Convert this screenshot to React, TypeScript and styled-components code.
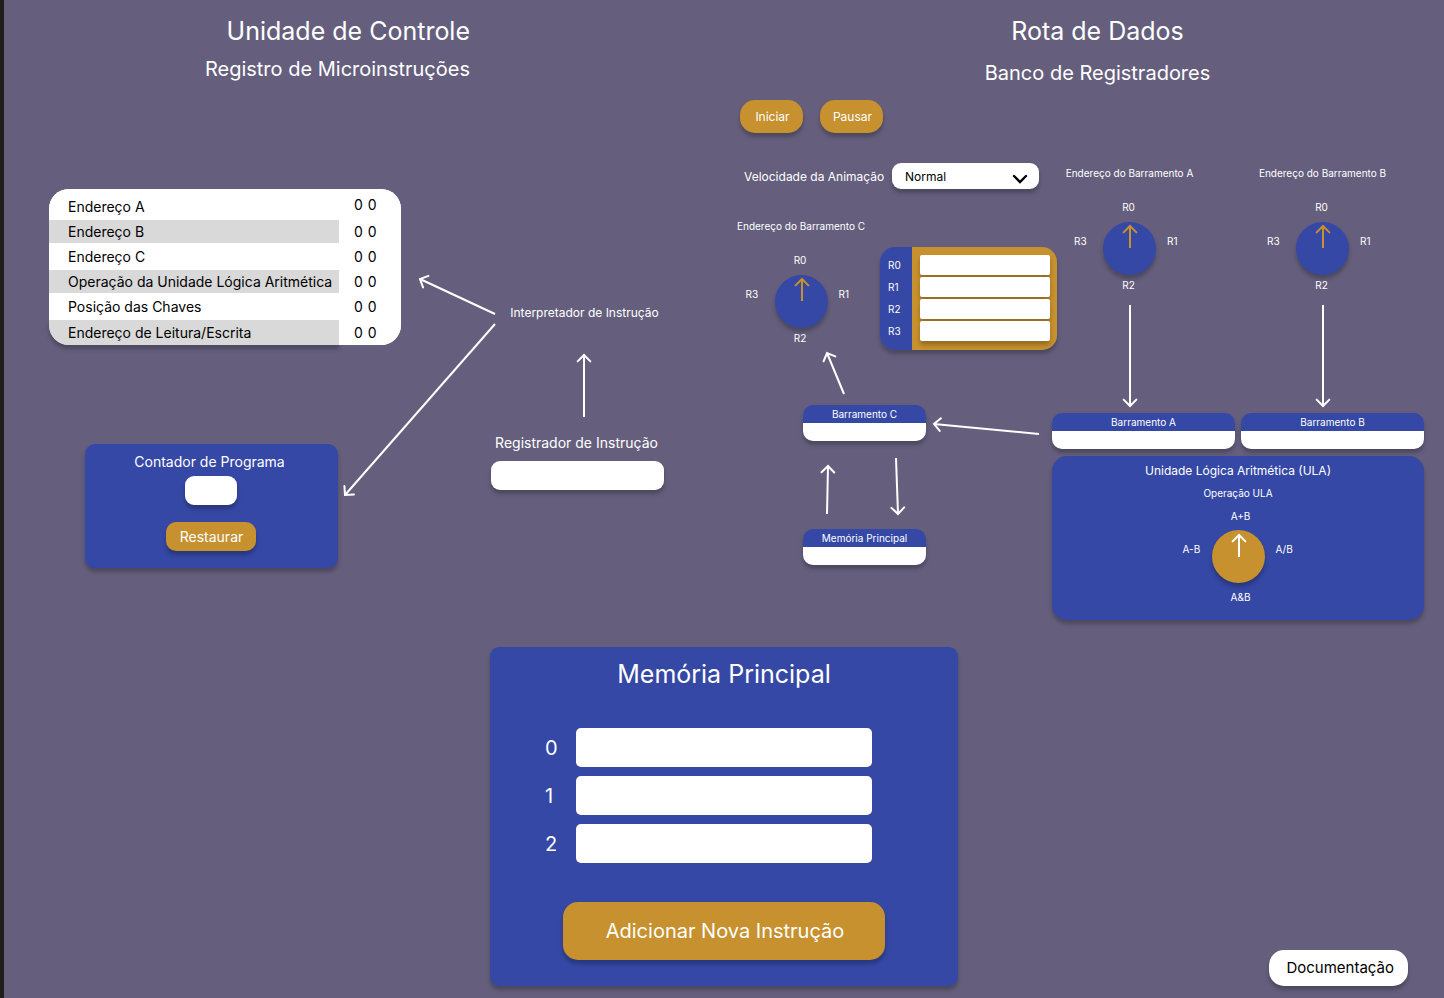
import React, { useId } from "react";
import styled, { createGlobalStyle } from "styled-components";

const color = {
  page: "#655f7d",
  edge: "#1e1e1e",
  blue: "#3548a5",
  gold: "#c6912e",
  stripe: "#d9d9d9",
  white: "#ffffff",
  black: "#000000",
};

const shadow = "0 4px 4px rgba(0, 0, 0, 0.25)";

const GlobalStyle = createGlobalStyle`
  *, *::before, *::after { box-sizing: border-box; }
  body {
    margin: 0;
    background: ${color.page};
    color: ${color.white};
    font-family: Inter, "Liberation Sans", sans-serif;
    font-size: 10px;
    line-height: 16px;
  }
  button, input, select { font: inherit; color: inherit; border: 0; padding: 0; margin: 0; }
  h1, h2, h3, h4 { margin: 0; font-weight: 400; }
`;

const Page = styled.main`
  min-height: 100vh;
  border-left: 4px solid ${color.edge};
  display: flex;
  flex-direction: column;
  gap: 27px;
  padding-bottom: 12px;
`;

const Sections = styled.div`
  display: grid;
  grid-template-columns: minmax(696px, 29fr) minmax(744px, 31fr);
`;

const ControlSection = styled.section`
  padding: 15px 36px 0 45px;
`;

const DataSection = styled.section`
  padding: 15px 20px 0 37px;
`;

const SectionHeader = styled.header<{ $align: string; $gap: number; $width: number; $indent: number }>`
  display: flex;
  flex-direction: column;
  align-items: ${(p) => p.$align};
  gap: ${(p) => p.$gap}px;
  width: ${(p) => p.$width}px;
  margin-left: ${(p) => p.$indent}px;
  white-space: nowrap;
`;

const Title = styled.h1`
  font-size: 25px;
  line-height: 32px;
`;

const Subtitle = styled.h2`
  font-size: 20px;
  line-height: 24px;
`;

/* ---------- shared parts ---------- */

const Button = styled.button<{ $w: number; $h: number; $size: number; $radius: number }>`
  width: ${(p) => p.$w}px;
  height: ${(p) => p.$h}px;
  padding-left: 2px;
  border-radius: ${(p) => p.$radius}px;
  font-size: ${(p) => p.$size}px;
  background: ${color.gold};
  color: ${color.white};
  box-shadow: ${shadow};
  cursor: pointer;
`;

const Field = styled.input<{ $w: number; $h: number; $radius: number; $flat?: boolean }>`
  display: block;
  width: ${(p) => p.$w}px;
  height: ${(p) => p.$h}px;
  border-radius: ${(p) => p.$radius}px;
  padding: 0 8px;
  background: ${color.white};
  color: ${color.black};
  box-shadow: ${(p) => (p.$flat ? "none" : shadow)};
`;

const Drawing = styled.svg`
  display: block;
  flex: none;
  overflow: visible;
  fill: none;
  stroke-width: 2;
`;

type WireProps = { from: [number, number]; to: [number, number]; stroke?: string };

function Wire({ from, to, stroke = color.white }: WireProps) {
  const angle = Math.atan2(to[1] - from[1], to[0] - from[0]);
  const head = (turn: number) => {
    const a = angle + Math.PI + turn;
    return `${to[0] + 9 * Math.cos(a)},${to[1] + 9 * Math.sin(a)}`;
  };
  return (
    <g stroke={stroke}>
      <path d={`M${from} L${to}`} />
      <path d={`M${head(Math.PI / 4)} L${to} L${head(-Math.PI / 4)}`} strokeLinecap="round" />
    </g>
  );
}

/* ---------- control unit ---------- */

const ControlGrid = styled.div`
  display: grid;
  grid-template-columns: 294px 58px 90px 173px;
  margin-top: 108px;
`;

const ControlLeft = styled.div`
  grid-area: 1 / 1 / 2 / 3;
  display: flex;
  flex-direction: column;
  gap: 99px;
`;

const ControlWires = styled.div`
  grid-area: 1 / 2 / 2 / 4;
  padding-top: 85px;
`;

const ControlRight = styled.div`
  grid-area: 1 / 4 / 2 / 5;
  display: flex;
  flex-direction: column;
  align-items: center;
  padding-top: 114px;
`;

const MicroTable = styled.table`
  width: 352px;
  border-collapse: separate;
  border-spacing: 0;
  border-radius: 20px;
  background: ${color.white};
  color: ${color.black};
  font-size: 14px;
  line-height: 20px;
`;

const MicroRow = styled.tr<{ $h: number; $striped: boolean }>`
  height: ${(p) => p.$h}px;
  th {
    width: 290px;
    padding: 0 0 0 19px;
    font-weight: 400;
    text-align: left;
    white-space: nowrap;
    background: ${(p) => (p.$striped ? color.stripe : color.white)};
  }
  td {
    padding: 0 0 0 15px;
    background: ${color.white};
  }
  &:first-child th { padding-top: 5px; border-top-left-radius: 20px; }
  &:first-child td { border-top-right-radius: 20px; }
  &:last-child th { border-bottom-left-radius: 20px; box-shadow: ${shadow}; }
  &:last-child td { border-bottom-right-radius: 20px; }
`;

const Bits = styled.span`
  display: flex;
  gap: 5px;
`;

const microRows = [
  { label: "Endereço A", height: 31 },
  { label: "Endereço B", height: 23 },
  { label: "Endereço C", height: 27 },
  { label: "Operação da Unidade Lógica Aritmética", height: 23 },
  { label: "Posição das Chaves", height: 27 },
  { label: "Endereço de Leitura/Escrita", height: 25 },
];

const CounterCard = styled.div`
  width: 253px;
  height: 124px;
  margin-left: 36px;
  padding: 8px 2px 0 0;
  border-radius: 10px;
  background: ${color.blue};
  box-shadow: ${shadow};
  display: flex;
  flex-direction: column;
  align-items: center;
  gap: 17px;
`;

const LabeledField = styled.div<{ $gap: number }>`
  display: flex;
  flex-direction: column;
  align-items: center;
  gap: ${(p) => p.$gap}px;
`;

const FieldLabel = styled.label`
  padding-right: 2px;
  font-size: 14px;
  line-height: 20px;
`;

const Interpreter = styled.div`
  display: flex;
  flex-direction: column;
  align-items: center;
  gap: 32px;
  padding-left: 14px;
  margin-bottom: 16px;
  font-size: 12px;
  line-height: 20px;
  white-space: nowrap;
`;

/* ---------- data path ---------- */

const DataBody = styled.div`
  display: flex;
  margin-top: 15px;
`;

const DataLeft = styled.div`
  width: 315px;
  flex: none;
`;

const DataRight = styled.div`
  width: 372px;
  flex: none;
  padding-top: 65px;
`;

const PlayBar = styled.div`
  display: flex;
  gap: 17px;
  padding-left: 3px;
`;

const SpeedBar = styled.div`
  display: flex;
  align-items: center;
  gap: 9px;
  margin: 30px 0 29px;
  padding-left: 7px;
  font-size: 12px;
  line-height: 16px;
`;

const SpeedLabel = styled.label`
  width: 139px;
  padding-top: 2px;
  white-space: nowrap;
`;

const SelectBox = styled.div`
  position: relative;
  width: 147px;
  height: 26px;
  select {
    appearance: none;
    width: 100%;
    height: 100%;
    padding: 2px 0 0 13px;
    border-radius: 9px;
    background: ${color.white};
    color: ${color.black};
    box-shadow: ${shadow};
  }
  svg {
    position: absolute;
    right: 11px;
    top: 10px;
    pointer-events: none;
  }
`;

const DialBox = styled.div<{ $titleGap: number }>`
  width: 129px;
  display: flex;
  flex-direction: column;
  align-items: center;
  white-space: nowrap;
  h4 {
    font-size: 10px;
    margin-bottom: ${(p) => p.$titleGap}px;
  }
`;

const DialRow = styled.div<{ $above: number; $below: number }>`
  display: flex;
  gap: 11px;
  margin: ${(p) => p.$above}px 0 ${(p) => p.$below}px;
`;

const DialSide = styled.span`
  width: 18px;
  padding-top: 11px;
`;

/* The operation names sit slightly right of the dial, the register names slightly left. */
const DialEnd = styled.span<{ $alu: boolean }>`
  padding: ${(p) => (p.$alu ? "0 0 0 5px" : "0 2px 0 0")};
`;

const DialFace = styled.div<{ $fill: string }>`
  width: 53px;
  height: 53px;
  border-radius: 50%;
  background: ${(p) => p.$fill};
  box-shadow: ${shadow};
`;

type DialProps = { title: string; options: [string, string, string, string]; alu?: boolean };

function Dial({ title, options, alu = false }: DialProps) {
  const [top, right, bottom, left] = options;
  return (
    <DialBox $titleGap={alu ? 7 : 18}>
      <h4>{title}</h4>
      <DialEnd $alu={alu}>{top}</DialEnd>
      <DialRow $above={alu ? 6 : 7} $below={alu ? 6 : 2}>
        <DialSide>{left}</DialSide>
        <DialFace $fill={alu ? color.gold : color.blue}>
          <Drawing width="53" height="53" viewBox="0 0 53 53" aria-hidden="true">
            <Wire from={[27, alu ? 27 : 26]} to={[27, alu ? 5 : 4]} stroke={alu ? color.white : color.gold} />
          </Drawing>
        </DialFace>
        <DialSide>{right}</DialSide>
      </DialRow>
      <DialEnd $alu={alu}>{bottom}</DialEnd>
    </DialBox>
  );
}

const BankRow = styled.div`
  display: flex;
  gap: 15px;
`;

const RegisterBank = styled.div`
  flex: none;
  display: flex;
  flex-direction: column;
  gap: 2px;
  width: 177px;
  margin-top: 29px;
  padding: 8px 7px 9px 8px;
  border-radius: 15px;
  background: linear-gradient(to right, ${color.blue} 32px, ${color.gold} 32px);
  box-shadow: ${shadow};
`;

const RegisterRow = styled.div`
  display: flex;
  justify-content: space-between;
  line-height: 20px;
`;

const BusBox = styled.div<{ $w: number }>`
  flex: none;
  width: ${(p) => p.$w}px;
  border-radius: 10px;
  overflow: hidden;
  text-align: center;
  background: ${color.blue};
  label { display: block; line-height: 18px; }
`;

const BusShadow = styled.div`
  flex: none;
  border-radius: 10px;
  box-shadow: ${shadow};
`;

function Bus({ name, width }: { name: string; width: number }) {
  const id = useId();
  return (
    <BusShadow>
      <BusBox $w={width}>
        <label htmlFor={id}>{name}</label>
        <Field id={id} $w={width} $h={18} $radius={0} $flat />
      </BusBox>
    </BusShadow>
  );
}

const ReturnWire = styled.div`
  padding-left: 85px;
  margin: 1px 0 10px;
`;

const BusChain = styled.div`
  padding-left: 66px;
  display: flex;
  align-items: flex-start;
  gap: 7px;
`;

const BusStack = styled.div`
  display: flex;
  flex-direction: column;
`;

const ExchangeWires = styled.div`
  margin: 17px 0 13px;
`;

const InputWire = styled.div`
  padding-top: 12px;
`;

const Dials = styled.div`
  display: flex;
  gap: 64px;
  padding-left: 13px;
`;

const DialColumn = styled.div`
  display: flex;
  flex-direction: column;
  align-items: center;
  gap: 12px;
`;

const InputBuses = styled.div`
  display: flex;
  justify-content: space-between;
  margin: 6px 0 7px;
`;

const AluCard = styled.div`
  height: 164px;
  padding-top: 7px;
  border-radius: 15px;
  background: ${color.blue};
  box-shadow: ${shadow};
  display: flex;
  flex-direction: column;
  align-items: center;
  gap: 6px;
  h3 { font-size: 12px; line-height: 16px; }
`;

/* ---------- main memory ---------- */

const Bottom = styled.div`
  display: grid;
  grid-template-columns: 1fr 468px 1fr;
  align-items: end;
`;

const MemoryCard = styled.section`
  grid-column: 2;
  padding: 11px 0 26px;
  border-radius: 9px;
  background: ${color.blue};
  box-shadow: ${shadow};
  display: flex;
  flex-direction: column;
  align-items: center;
`;

const MemoryList = styled.div`
  display: flex;
  flex-direction: column;
  gap: 9px;
  margin: 38px 0 39px;
  padding-right: 31px;
`;

const MemoryRow = styled.div`
  display: flex;
  align-items: center;
  font-size: 20px;
  line-height: 24px;
  label { width: 31px; }
`;

const DocLink = styled.a`
  justify-self: end;
  margin-right: 36px;
  padding: 0 14px 0 17px;
  height: 36px;
  border-radius: 15px;
  background: ${color.white};
  color: ${color.black};
  box-shadow: ${shadow};
  font-size: 15px;
  line-height: 36px;
  text-decoration: none;
`;

const registers: [string, string, string, string] = ["R0", "R1", "R2", "R3"];

export default function App() {
  return (
    <>
      <GlobalStyle />
      <Page>
        <Sections>
          <ControlSection>
            <SectionHeader $align="flex-end" $gap={10} $width={421} $indent={0}>
              <Title>Unidade de Controle</Title>
              <Subtitle>Registro de Microinstruções</Subtitle>
            </SectionHeader>
            <ControlGrid>
              <ControlLeft>
                <MicroTable>
                  <tbody>
                    {microRows.map((row, i) => (
                      <MicroRow key={row.label} $h={row.height} $striped={i % 2 === 1}>
                        <th scope="row">{row.label}</th>
                        <td>
                          <Bits>
                            <span>0</span>
                            <span>0</span>
                          </Bits>
                        </td>
                      </MicroRow>
                    ))}
                  </tbody>
                </MicroTable>
                <CounterCard>
                  <LabeledField $gap={4}>
                    <FieldLabel htmlFor="counter">Contador de Programa</FieldLabel>
                    <Field id="counter" $w={52} $h={29} $radius={9} />
                  </LabeledField>
                  <Button $w={90} $h={29} $size={14} $radius={10}>Restaurar</Button>
                </CounterCard>
              </ControlLeft>
              <ControlWires>
                <Drawing width="153" height="223" viewBox="343 274 153 223" aria-hidden="true">
                  <Wire from={[495, 314]} to={[420, 279]} />
                  <Wire from={[495, 324]} to={[345, 495]} />
                </Drawing>
              </ControlWires>
              <ControlRight>
                <Interpreter>
                  <span>Interpretador de Instrução</span>
                  <Drawing width="16" height="62" viewBox="0 0 16 62" aria-hidden="true">
                    <Wire from={[8, 62]} to={[8, 0]} />
                  </Drawing>
                </Interpreter>
                <LabeledField $gap={8}>
                  <FieldLabel htmlFor="instruction">Registrador de Instrução</FieldLabel>
                  <Field id="instruction" $w={173} $h={29} $radius={9} />
                </LabeledField>
              </ControlRight>
            </ControlGrid>
          </ControlSection>

          <DataSection>
            <SectionHeader $align="center" $gap={14} $width={225} $indent={248}>
              <Title>Rota de Dados</Title>
              <Subtitle>Banco de Registradores</Subtitle>
            </SectionHeader>
            <DataBody>
              <DataLeft>
                <PlayBar>
                  <Button $w={63} $h={33} $size={12} $radius={15}>Iniciar</Button>
                  <Button $w={63} $h={33} $size={12} $radius={15}>Pausar</Button>
                </PlayBar>
                <SpeedBar>
                  <SpeedLabel htmlFor="speed">Velocidade da Animação</SpeedLabel>
                  <SelectBox>
                    <select id="speed" defaultValue="normal">
                      <option value="normal">Normal</option>
                    </select>
                    <svg width="16" height="11" viewBox="0 0 16 11" fill="none" stroke="#000" strokeWidth="2.4" strokeLinecap="round" aria-hidden="true">
                      <path d="M2 3 L8 9 L14 3" />
                    </svg>
                  </SelectBox>
                </SpeedBar>
                <BankRow>
                  <Dial title="Endereço do Barramento C" options={registers} />
                  <RegisterBank>
                    {registers.map((name) => (
                      <RegisterRow key={name}>
                        <label htmlFor={`reg-${name}`}>{name}</label>
                        <Field id={`reg-${name}`} $w={130} $h={20} $radius={2} />
                      </RegisterRow>
                    ))}
                  </RegisterBank>
                </BankRow>
                <ReturnWire>
                  <Drawing width="24" height="44" viewBox="822 351 24 44" aria-hidden="true">
                    <Wire from={[844, 394]} to={[827, 353]} />
                  </Drawing>
                </ReturnWire>
                <BusChain>
                  <BusStack>
                    <Bus name="Barramento C" width={123} />
                    <ExchangeWires>
                      <Drawing width="123" height="58" viewBox="803 458 123 58" aria-hidden="true">
                        <Wire from={[827, 514]} to={[828, 466]} />
                        <Wire from={[896, 458]} to={[898, 514]} />
                      </Drawing>
                    </ExchangeWires>
                    <Bus name="Memória Principal" width={123} />
                  </BusStack>
                  <InputWire>
                    <Drawing width="107" height="20" viewBox="933 417 107 20" aria-hidden="true">
                      <Wire from={[1039, 434]} to={[934, 424]} />
                    </Drawing>
                  </InputWire>
                </BusChain>
              </DataLeft>
              <DataRight>
                <Dials>
                  {["A", "B"].map((bus) => (
                    <DialColumn key={bus}>
                      <Dial title={`Endereço do Barramento ${bus}`} options={registers} />
                      <Drawing width="17" height="102" viewBox="0 0 17 102" aria-hidden="true">
                        <Wire from={[9, 0]} to={[9, 101]} />
                      </Drawing>
                    </DialColumn>
                  ))}
                </Dials>
                <InputBuses>
                  <Bus name="Barramento A" width={183} />
                  <Bus name="Barramento B" width={183} />
                </InputBuses>
                <AluCard>
                  <h3>Unidade Lógica Aritmética (ULA)</h3>
                  <Dial title="Operação ULA" options={["A+B", "A/B", "A&B", "A-B"]} alu />
                </AluCard>
              </DataRight>
            </DataBody>
          </DataSection>
        </Sections>

        <Bottom>
          <MemoryCard>
            <Title as="h2">Memória Principal</Title>
            <MemoryList>
              {[0, 1, 2].map((n) => (
                <MemoryRow key={n}>
                  <label htmlFor={`mem-${n}`}>{n}</label>
                  <Field id={`mem-${n}`} $w={296} $h={39} $radius={5} $flat />
                </MemoryRow>
              ))}
            </MemoryList>
            <Button $w={322} $h={58} $size={20} $radius={15}>Adicionar Nova Instrução</Button>
          </MemoryCard>
          <DocLink href="#documentacao">Documentação</DocLink>
        </Bottom>
      </Page>
    </>
  );
}
